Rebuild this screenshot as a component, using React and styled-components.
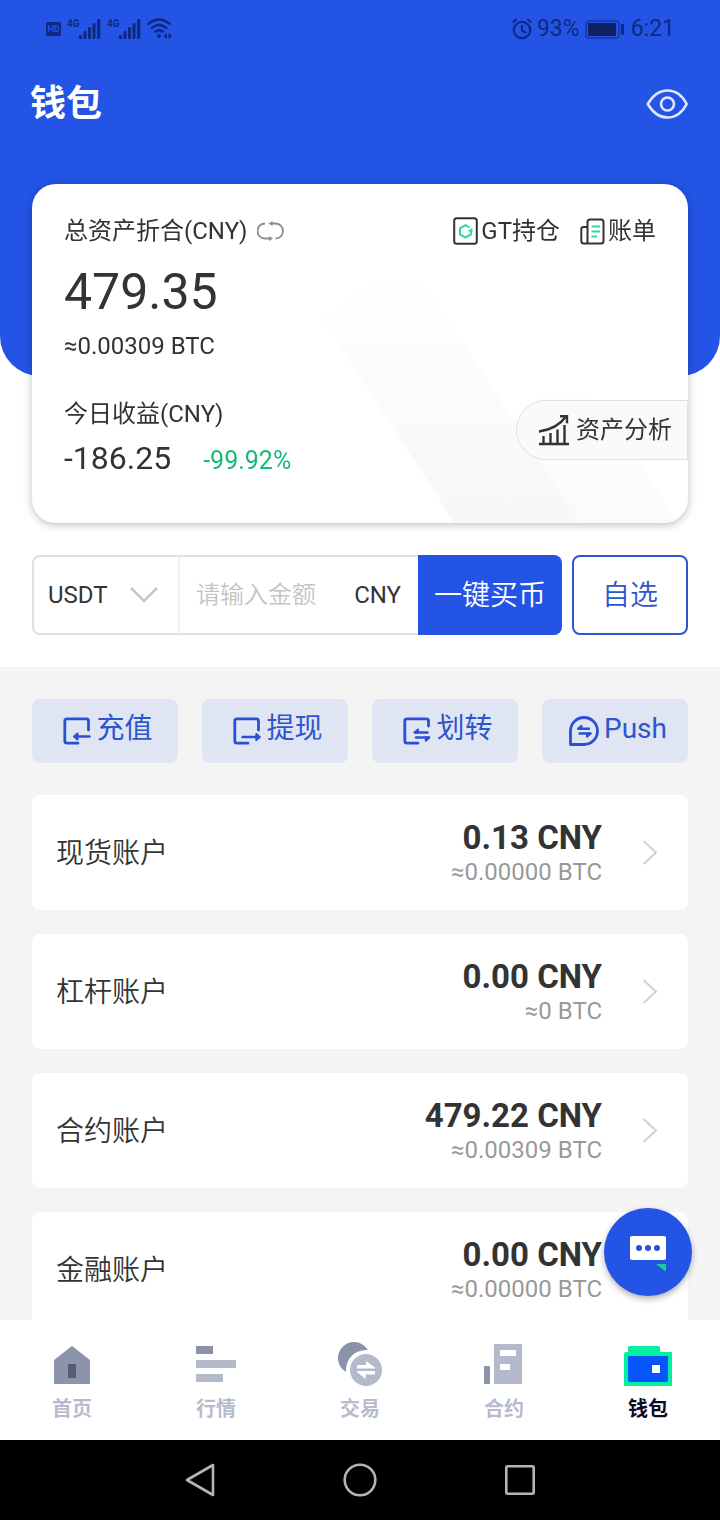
import React from "react";
import styled, { createGlobalStyle } from "styled-components";

const blue = "#2354e6";
const linkBlue = "#2f55cc";
const ink = "#333333";
const statusInk = "#0d2a80";

const GlobalStyle = createGlobalStyle`
  *, *::before, *::after { box-sizing: border-box; }
  body {
    margin: 0;
    background: #000;
    color: ${ink};
    font-family: Roboto, "Noto Sans CJK SC", sans-serif;
    font-size: 24px;
    line-height: 32px;
  }
  button, input, select { font: inherit; color: inherit; }
  button { cursor: pointer; }
  a { color: inherit; text-decoration: none; }
  svg { display: block; flex: none; }
`;

const Screen = styled.div`
  display: flex;
  flex-direction: column;
  height: 100vh;
  background: #f4f4f4;
`;

const Scroll = styled.main`
  flex: 1;
  min-height: 0;
  overflow-y: auto;
  scrollbar-width: none;
`;

/* ---------- header ---------- */

const Hero = styled.header`
  background: ${blue};
  padding-bottom: 224px;
  border-radius: 0 0 40px 40px;
`;

const StatusBar = styled.div`
  display: flex;
  justify-content: space-between;
  align-items: center;
  height: 56px;
  padding: 2px 45px 0 46px;
  color: ${statusInk};
`;

const StatusGroup = styled.div`
  display: flex;
  align-items: center;
  gap: ${(p) => p.$gap}px;
  font-size: 23px;
`;

const HdBadge = styled.span`
  width: 15px;
  height: 14px;
  border-radius: 2px;
  background: ${statusInk};
  color: ${blue};
  font-size: 9px;
  font-weight: 700;
  line-height: 14px;
  text-align: center;
`;

const Signal = styled.span`
  display: flex;
  align-items: flex-start;
`;

const Network = styled.span`
  width: 12px;
  font-size: 10px;
  font-weight: 700;
  line-height: 10px;
`;

const TitleBar = styled.div`
  display: flex;
  justify-content: space-between;
  align-items: center;
  height: 96px;
  padding: 0 32px 0 30px;
  color: #fff;
`;

const Title = styled.h1`
  margin: 0;
  font-size: 36px;
  line-height: 48px;
  font-weight: 700;
`;

const IconButton = styled.button`
  padding: 0;
  border: 0;
  background: none;
`;

/* ---------- asset card ---------- */

const TopPanel = styled.section`
  background: #fff;
  padding-bottom: 32px;
`;

const AssetCard = styled.section`
  position: relative;
  overflow: hidden;
  margin: -192px 32px 32px;
  padding: 30px 0 44px 32px;
  border-radius: 24px;
  background: #fff;
`;

const CardShadow = styled.div`
  filter: drop-shadow(0 2px 4px rgba(0, 0, 0, 0.25));
`;

const CardPattern = styled.svg`
  position: absolute;
  right: 0;
  bottom: 0;
`;

const CardBody = styled.div`
  position: relative;
`;

const CardHead = styled.div`
  display: flex;
  justify-content: space-between;
  align-items: center;
  height: 34px;
  padding-right: 32px;
`;

const Inline = styled.span`
  display: flex;
  align-items: center;
  gap: ${(p) => p.$gap}px;
`;

const CardLink = styled.a`
  display: flex;
  align-items: center;
  gap: 3px;
`;

const Total = styled.div`
  margin-top: 14px;
  font-size: 50px;
  line-height: 60px;
`;

const TotalBtc = styled.div`
  margin-top: 8px;
`;

const CardFoot = styled.div`
  display: flex;
  justify-content: space-between;
  align-items: flex-start;
  margin-top: 36px;
`;

const Profit = styled.div`
  display: flex;
  align-items: center;
  gap: 32px;
  height: 43px;
  margin-top: 6px;
  font-size: 32px;
  line-height: 40px;
`;

const Percent = styled.span`
  padding-top: 6px;
  color: #17b978;
  font-size: 25px;
  line-height: 34px;
`;

const AnalysisButton = styled.button`
  display: flex;
  align-items: center;
  gap: 6px;
  height: 60px;
  margin-top: 2px;
  padding: 0 15px 0 21px;
  border: 1px solid #e0e0e0;
  border-radius: 30px 0 0 30px;
  background: #fafafa;
`;

/* ---------- quick buy ---------- */

const BuyRow = styled.form`
  display: flex;
  height: 80px;
  margin: 0 32px;
`;

const CoinField = styled.label`
  position: relative;
  display: flex;
  align-items: center;
  width: 146px;
  border: 2px solid #e0e0e0;
  border-right: 0;
  border-radius: 8px 0 0 8px;

  svg {
    position: absolute;
    right: 20px;
    pointer-events: none;
  }
`;

const CoinSelect = styled.select`
  appearance: none;
  width: 100%;
  height: 100%;
  padding: 0 0 0 14px;
  border: 0;
  border-radius: 8px;
  background: transparent;
`;

const AmountField = styled.label`
  display: flex;
  align-items: center;
  flex: 1;
  min-width: 0;
  padding: 0 17px 0 16px;
  border: 2px solid #e0e0e0;
  border-width: 2px 0;
  border-left: 2px solid #f0f0f0;
`;

const AmountInput = styled.input`
  flex: 1;
  min-width: 0;
  height: 40px;
  padding: 0;
  border: 0;
  background: none;
  outline: 0;

  &::placeholder {
    color: #c4c4c4;
    font-weight: 350;
    opacity: 1;
  }
`;

const BuyButton = styled.button`
  width: 144px;
  padding: 2px 0 0;
  border: 0;
  border-radius: 0 8px 8px 0;
  background: ${blue};
  color: #fff;
  font-size: 28px;
  font-weight: 350;
`;

const PickButton = styled.button`
  width: 116px;
  margin-left: 10px;
  padding: 2px 0 0;
  border: 2px solid ${linkBlue};
  border-radius: 8px;
  background: #fff;
  color: ${linkBlue};
  font-size: 28px;
  font-weight: 350;
`;

/* ---------- actions and accounts ---------- */

const Actions = styled.nav`
  display: grid;
  grid-template-columns: repeat(4, 1fr);
  gap: 24px;
  padding: 32px;
`;

const Action = styled.button`
  display: flex;
  justify-content: center;
  align-items: center;
  gap: 5px;
  height: 64px;
  padding: 0 0 0 6px;
  border: 0;
  border-radius: 8px;
  background: #dfe5f3;
  color: ${linkBlue};
  font-size: 28px;
`;

const ActionText = styled.span`
  padding-bottom: 4px;
`;

const Accounts = styled.ul`
  display: flex;
  flex-direction: column;
  gap: 24px;
  margin: 0;
  padding: 0 32px 32px;
  list-style: none;
`;

const AccountLink = styled.a`
  display: flex;
  align-items: center;
  height: 115px;
  padding: 0 30px 0 24px;
  border-radius: 8px;
  background: #fff;
`;

const AccountName = styled.span`
  flex: 1;
  padding-top: 2px;
  font-size: 28px;
  font-weight: 350;
`;

const AccountValue = styled.span`
  display: flex;
  flex-direction: column;
  margin-right: 40px;
  padding-top: 2px;
  text-align: right;
  color: #999;
`;

const Amount = styled.strong`
  color: ${ink};
  font-size: 33px;
  line-height: 36px;
  font-weight: 700;
`;

/* ---------- bottom bars ---------- */

const Bottom = styled.footer`
  position: relative;
`;

const ChatButton = styled.button`
  position: absolute;
  right: 28px;
  bottom: calc(100% + 24px);
  display: grid;
  place-items: center;
  width: 88px;
  height: 88px;
  padding: 0;
  border: 0;
  border-radius: 50%;
  background: ${blue};
  box-shadow: 0 3px 6px rgba(0, 0, 0, 0.3);
`;

const TabBar = styled.nav`
  display: grid;
  grid-template-columns: repeat(5, 1fr);
  height: 120px;
  padding-top: 20px;
  background: #fff;
`;

const Tab = styled.a`
  display: flex;
  flex-direction: column;
  align-items: center;
  gap: 7px;
  color: ${(p) => (p.$active ? "#0b0b22" : "#b6bccd")};
  font-size: 20px;
  line-height: 24px;
  font-weight: 700;
`;

const SystemBar = styled.div`
  display: flex;
  justify-content: center;
  align-items: center;
  gap: 120px;
  height: 80px;
  background: #000;
`;

/* ---------- icons ---------- */

const Bars = () => (
  <svg width="22" height="20" fill={statusInk} aria-hidden="true">
    <rect x="0" y="16" width="3" height="4" rx="1" />
    <rect x="4.500" y="12" width="3" height="8" rx="1" />
    <rect x="9" y="8" width="3" height="12" rx="1" />
    <rect x="13.500" y="4" width="3" height="16" rx="1" />
    <rect x="18" y="0" width="3.300" height="20" rx="1" />
  </svg>
);

const Wifi = () => (
  <svg width="26" height="22" fill="none" stroke={statusInk} strokeWidth="2.300" aria-hidden="true">
    <path d="M.500 6.500Q12 -3.500 23.500 6.500M4 10.500Q12 3.500 20 10.500M7.500 14.200Q12 10.400 16.500 14.200" />
    <circle cx="12" cy="18" r="2" fill={statusInk} stroke="none" />
    <path d="M20 15v6l-3.500-3zM21.500 15v6l3.500-3z" fill={statusInk} stroke="none" />
  </svg>
);

const Alarm = () => (
  <svg width="20" height="22" fill="none" stroke={statusInk} strokeWidth="2.200" aria-hidden="true">
    <circle cx="10" cy="12" r="8.200" />
    <path d="M10 7v5.500l4 2.500M.700 4.500l4-3.500M19.300 4.500l-4-3.500" />
  </svg>
);

const Battery = () => (
  <svg width="41" height="19" aria-hidden="true">
    <rect x="1" y="1" width="33" height="17" rx="3" fill="none" stroke={statusInk} strokeOpacity=".65" strokeWidth="1.500" />
    <rect x="3" y="3" width="28" height="13" fill="#10225f" />
    <rect x="36" y="4" width="3" height="11" rx="1" fill={statusInk} />
  </svg>
);

const Eye = () => (
  <svg width="42" height="30" fill="none" stroke="#dde6ff" strokeWidth="2.600" aria-hidden="true">
    <path d="M1.800 15C7 6 14 1.500 21.500 1.500S36 6 40.700 15C36 24 29 28.500 21.500 28.500S7 24 1.800 15Z" strokeLinejoin="round" />
    <circle cx="21.500" cy="15" r="6.500" />
  </svg>
);

const Swap = () => (
  <svg width="28" height="20" fill="none" stroke="#8c8c8c" strokeWidth="1.800" aria-hidden="true">
    <path d="M8 2.500A7.200 7.200 0 0 0 8 17.500h5M14 2.500H18.500a7.200 7.200 0 0 1 0 15" />
    <path d="M15.500 0v5l-4-2.500zM12 15v5l4-2.500z" fill="#8c8c8c" stroke="none" />
  </svg>
);

const Holding = () => (
  <svg width="25" height="28" fill="none" strokeWidth="2" aria-hidden="true">
    <rect x="1.200" y="1.200" width="22.600" height="25.600" rx="2.500" stroke={ink} />
    <path d="M16.500 10.500L12.500 8.200L7 11.300v6.200l5.500 3l5.500-3v-3.500" stroke="#2fd9a4" />
    <path d="M14.500 14l5-3v4z" fill="#2fd9a4" />
  </svg>
);

const Bill = () => (
  <svg width="25" height="27" fill="none" strokeWidth="2" aria-hidden="true">
    <path d="M7.500 25.500V4Q7.500 1.500 10 1.500h11q2.500 0 2.500 2.500v19q0 2.500-2.500 2.500H4Q1.300 25.500 1.300 23V11Q1.300 9 3.500 9h4" stroke={ink} />
    <path d="M11.500 8.500h8.500M11.500 13.500h8.500M11.500 18.500h5.500" stroke="#2fd9a4" />
  </svg>
);

const Chart = () => (
  <svg width="32" height="32" fill="none" stroke={ink} strokeWidth="2.400" aria-hidden="true">
    <path d="M1 30h30M5.500 29v-7M12.500 29v-10M19.500 29V15.500M26.500 29V11M1 17.500Q19 15 28 2.500" />
    <path d="M22 2.200h7v7" />
  </svg>
);

const ChevronDown = () => (
  <svg width="28" height="18" fill="none" stroke="#c8c8c8" strokeWidth="2.600" aria-hidden="true">
    <path d="M1 2l13 13L27 2" />
  </svg>
);

const ChevronRight = () => (
  <svg width="16" height="26" fill="none" stroke="#d2d2d2" strokeWidth="2" aria-hidden="true">
    <path d="M1.500 1L14 12.500L1.500 24" />
  </svg>
);

const frame = "M25.500 13V4Q25.500 1.800 23.300 1.800H4Q1.800 1.800 1.800 4V24Q1.800 26.200 4 26.200H15";

const ActionIcon = ({ kind }) => (
  <svg
    width={kind === "push" ? 30 : 28}
    height={kind === "push" ? 30 : 28}
    fill="none"
    stroke="#2b50d6"
    strokeWidth="2.800"
    strokeLinecap="round"
    strokeLinejoin="round"
    aria-hidden="true"
  >
    {kind === "deposit" && (
      <>
        <path d={frame} />
        <path d="M26.500 19.500H12" strokeWidth="2.400" />
        <path d="M14.500 16.500l-3.500 3l3.500 3z" fill="#2b50d6" strokeWidth="2" />
      </>
    )}
    {kind === "withdraw" && (
      <>
        <path d={frame} />
        <path d="M9.500 20H25" strokeWidth="2.400" />
        <path d="M23.300 17l3.500 3l-3.500 3z" fill="#2b50d6" strokeWidth="2" />
      </>
    )}
    {kind === "transfer" && (
      <>
        <path d="M25.500 9V4Q25.500 1.800 23.300 1.800H4Q1.800 1.800 1.800 4V24Q1.800 26.200 4 26.200H15" />
        <path d="M24.500 15.500H12M13 20.500h13" strokeWidth="2.400" />
        <path d="M11.500 15.500l3.500-3v3zM26.300 20.500l-3.500 3.300v-3.300z" fill="#2b50d6" strokeWidth="2" />
      </>
    )}
    {kind === "push" && (
      <>
        <path d="M1.500 28.500V15A13.500 13.500 0 1 1 15 28.500Z" />
        <path d="M20 12.800H9.500M10.500 17.500h11" strokeWidth="2.400" />
        <path d="M9 12.800l3.500-3v3zM21.500 17.500l-3.500 3.300v-3.300z" fill="#2b50d6" strokeWidth="2" />
      </>
    )}
  </svg>
);

const TabIcon = ({ kind }) => (
  <svg width="48" height="50" viewBox="0 0 48 50" aria-hidden="true">
    {kind === "home" && (
      <>
        <path d="M24 6L42 20V43q0 1-1 1H7q-1 0-1-1V20Z" fill="#8b94aa" />
        <path d="M20 24h8v14h-8z" fill="#555d75" />
      </>
    )}
    {kind === "market" && (
      <>
        <path d="M4 6h17v8H4z" fill="#8b93ab" />
        <path d="M4 20h40v8H4zM4 34h27v8H4z" fill="#b4bacb" />
      </>
    )}
    {kind === "trade" && (
      <>
        <circle cx="18" cy="18" r="16" fill="#8b93ab" />
        <circle cx="30" cy="30" r="20" fill="#fff" />
        <circle cx="30" cy="30" r="16" fill="#b4bacb" />
        <path d="M21 25h9v-4l9 6.500v1H21zM39 31v3.500h-9.500v4.500l-8.500-7v-1z" fill="#fff" />
      </>
    )}
    {kind === "contract" && (
      <>
        <path d="M14 4h28v40H14zM20 10v6h16v-6zM20 24v6h10v-6z" fill="#b4bacb" fillRule="evenodd" />
        <rect x="4" y="26" width="6" height="18" rx="1" fill="#8b93ab" />
      </>
    )}
    {kind === "wallet" && (
      <>
        <path d="M4 8Q4 6 6 6h28q2 0 2 2v4h11q1 0 1 1v32q0 1-1 1H1q-1 0-1-1V14q0-2 2-2h2z" fill="#05efa2" />
        <path d="M4 16h40v24q0 2-2 2H6q-2 0-2-2z" fill="#0655fb" />
        <rect x="28" y="25" width="8" height="8" rx="1" fill="#fff" />
      </>
    )}
  </svg>
);

const Chat = () => (
  <svg width="36" height="38" aria-hidden="true">
    <rect x="0" y="3" width="36" height="24" rx="2" fill="#fff" />
    <g fill="#2b50d6">
      <circle cx="9" cy="15" r="3" />
      <circle cx="18" cy="15" r="3" />
      <circle cx="27" cy="15" r="3" />
    </g>
    <path d="M26 31h10v5.500q0 2-2 1Z" fill="#14cf97" />
  </svg>
);

/* ---------- data ---------- */

const actions = [
  ["deposit", "充值"],
  ["withdraw", "提现"],
  ["transfer", "划转"],
  ["push", "Push"],
];

const accounts = [
  ["现货账户", "0.13 CNY", "≈0.00000 BTC"],
  ["杠杆账户", "0.00 CNY", "≈0 BTC"],
  ["合约账户", "479.22 CNY", "≈0.00309 BTC"],
  ["金融账户", "0.00 CNY", "≈0.00000 BTC"],
];

const tabs = [
  ["home", "首页"],
  ["market", "行情"],
  ["trade", "交易"],
  ["contract", "合约"],
  ["wallet", "钱包"],
];

export default function App() {
  return (
    <Screen>
      <GlobalStyle />
      <Scroll>
        <TopPanel>
          <Hero>
            <StatusBar>
              <StatusGroup $gap={6}>
                <HdBadge>HD</HdBadge>
                <Signal>
                  <Network>4G</Network>
                  <Bars />
                </Signal>
                <Signal>
                  <Network>4G</Network>
                  <Bars />
                </Signal>
                <Wifi />
              </StatusGroup>
              <StatusGroup $gap={5}>
                <Alarm />
                <span>93%</span>
                <Battery />
                <span>6:21</span>
              </StatusGroup>
            </StatusBar>
            <TitleBar>
              <Title>钱包</Title>
              <IconButton type="button" aria-label="隐藏资产">
                <Eye />
              </IconButton>
            </TitleBar>
          </Hero>

          <CardShadow>
            <AssetCard>
              <CardPattern width="380" height="290" aria-hidden="true">
                <defs>
                  <linearGradient id="band" x1="0" y1="0" x2="0" y2="1">
                    <stop offset="0.100" stopColor="#fff" />
                    <stop offset="0.400" stopColor="#fcfcfc" />
                    <stop offset="1" stopColor="#f7f7f7" />
                  </linearGradient>
                  <linearGradient id="bandSoft" x1="0" y1="0" x2="0" y2="1">
                    <stop offset="0.150" stopColor="#fff" />
                    <stop offset="1" stopColor="#fafafa" />
                  </linearGradient>
                </defs>
                <path d="M15 87L95 17L272 290H147Z" fill="url(#band)" />
                <path d="M264 127L204 185L272 290H370Z" fill="url(#bandSoft)" />
              </CardPattern>
              <CardBody>
                <CardHead>
                  <Inline $gap={10}>
                    总资产折合(CNY)
                    <Swap />
                  </Inline>
                  <Inline $gap={20}>
                    <CardLink href="#gt">
                      <Holding />
                      GT持仓
                    </CardLink>
                    <CardLink href="#bill">
                      <Bill />
                      账单
                    </CardLink>
                  </Inline>
                </CardHead>
                <Total>479.35</Total>
                <TotalBtc>≈0.00309 BTC</TotalBtc>
                <CardFoot>
                  <div>
                    <div>今日收益(CNY)</div>
                    <Profit>
                      -186.25 <Percent>-99.92%</Percent>
                    </Profit>
                  </div>
                  <AnalysisButton type="button">
                    <Chart />
                    资产分析
                  </AnalysisButton>
                </CardFoot>
              </CardBody>
            </AssetCard>
          </CardShadow>

          <BuyRow onSubmit={(e) => e.preventDefault()}>
            <CoinField>
              <CoinSelect aria-label="币种" defaultValue="USDT">
                <option>USDT</option>
              </CoinSelect>
              <ChevronDown />
            </CoinField>
            <AmountField>
              <AmountInput placeholder="请输入金额" inputMode="decimal" />
              CNY
            </AmountField>
            <BuyButton type="submit">一键买币</BuyButton>
            <PickButton type="button">自选</PickButton>
          </BuyRow>
        </TopPanel>

        <Actions>
          {actions.map(([kind, label]) => (
            <Action key={kind} type="button">
              <ActionIcon kind={kind} />
              <ActionText>{label}</ActionText>
            </Action>
          ))}
        </Actions>

        <Accounts>
          {accounts.map(([name, amount, btc]) => (
            <li key={name}>
              <AccountLink href="#account">
                <AccountName>{name}</AccountName>
                <AccountValue>
                  <Amount>{amount}</Amount>
                  <span>{btc}</span>
                </AccountValue>
                <ChevronRight />
              </AccountLink>
            </li>
          ))}
        </Accounts>
      </Scroll>

      <Bottom>
        <ChatButton type="button" aria-label="客服">
          <Chat />
        </ChatButton>
        <TabBar>
          {tabs.map(([kind, label]) => (
            <Tab key={kind} href={`#${kind}`} $active={kind === "wallet"}>
              <TabIcon kind={kind} />
              {label}
            </Tab>
          ))}
        </TabBar>
        <SystemBar>
          <IconButton type="button" aria-label="返回">
            <svg width="40" height="40" fill="none" stroke="#b4b4b4" strokeWidth="2.600" strokeLinejoin="round">
              <path d="M7 20L33 5v30Z" />
            </svg>
          </IconButton>
          <IconButton type="button" aria-label="主屏幕">
            <svg width="40" height="40" fill="none" stroke="#b4b4b4" strokeWidth="2.600">
              <circle cx="20" cy="20" r="15.300" />
            </svg>
          </IconButton>
          <IconButton type="button" aria-label="最近任务">
            <svg width="40" height="40" fill="none" stroke="#b4b4b4" strokeWidth="2.600">
              <rect x="6.300" y="6.300" width="27.400" height="27.400" rx="1" />
            </svg>
          </IconButton>
        </SystemBar>
      </Bottom>
    </Screen>
  );
}
